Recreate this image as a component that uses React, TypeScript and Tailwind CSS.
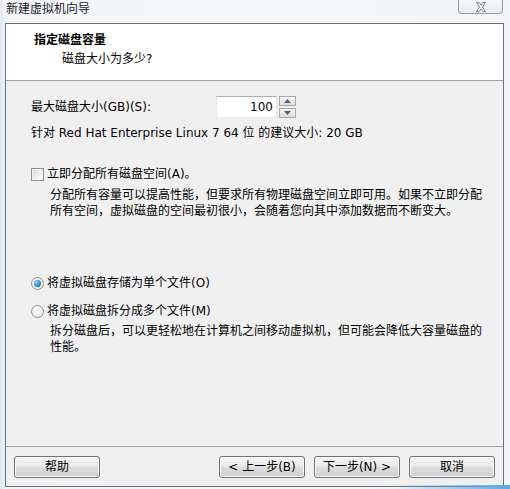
import React from "react";

const FONT = { fontFamily: '"DejaVu Sans", "Noto Sans CJK SC", sans-serif' };

function Btn({ children }: { children: React.ReactNode }) {
  return (
    <div className="w-[86px] h-[22px] rounded-[3px] border border-[#707070] bg-[linear-gradient(#f2f2f2_0%,#ebebeb_45%,#dddddd_50%,#cfcfcf_100%)] shadow-[inset_0_0_0_1px_#fcfcfc] flex items-center justify-center text-[12px] leading-[16px] text-black">
      {children}
    </div>
  );
}

function Radio({ checked }: { checked?: boolean }) {
  return (
    <div className="w-[13px] h-[13px] rounded-full border border-[#8e8f8f] bg-[radial-gradient(circle_at_40%_40%,#ffffff,#e0e0e0)] flex items-center justify-center shrink-0">
      {checked && (
        <div className="w-[7px] h-[7px] rounded-full bg-[radial-gradient(circle_at_35%_35%,#8fd4ff,#1c6fbf_70%,#0c4a8a)]" />
      )}
    </div>
  );
}

export default function App() {
  return (
    <div
      className="w-[510px] h-[489px] overflow-hidden relative bg-[linear-gradient(90deg,#dfe7ef_0px,#f3f5f8_6px,#f6f7f9_60%,#f2f4f7_100%)]"
      style={FONT}
    >
      {/* title bar */}
      <div className="h-[23px] flex items-start justify-between">
        <div className="pl-[6px] pt-[1px] text-[12px] leading-[16px] text-[#1a1a1a]">新建虚拟机向导</div>
        <div className="mr-[7px] w-[45px] h-[14px] rounded-b-[4px] border border-t-0 border-[#9a9ea6] bg-[linear-gradient(#f8f8f8,#e9ebee)] flex items-center justify-center">
          <svg width="12" height="10" viewBox="0 0 12 10">
            <path
              d="M1.5 0.5 L4 0.5 L6 3 L8 0.5 L10.5 0.5 L7.5 5 L10.5 9.5 L8 9.5 L6 7 L4 9.5 L1.5 9.5 L4.5 5 Z"
              fill="#f4f4f4"
              stroke="#7a7f88"
              strokeWidth="1"
              strokeLinejoin="round"
            />
          </svg>
        </div>
      </div>

      {/* client */}
      <div className="ml-[5px] w-[499px] h-[464px] border border-[#6e6e6e] bg-[#f0f0f0] flex flex-col text-black">
        {/* header */}
        <div className="h-[56px] bg-white pt-[8px] shrink-0">
          <div className="pl-[28px] text-[12px] leading-[16px] font-bold">指定磁盘容量</div>
          <div className="pl-[56px] mt-[3px] text-[12px] leading-[16px]">磁盘大小为多少?</div>
        </div>
        <div className="h-px bg-[#a0a0a0] shrink-0" />

        {/* body */}
        <div className="flex-1 pl-[25px] pt-[15px] text-[12px] leading-[16px]">
          <div className="flex items-center h-[22px]">
            <div className="w-[185px]">最大磁盘大小(GB)(S):</div>
            <div className="w-[61px] h-[22px] bg-white border border-[#abadb3] border-r-[#dbdfe6] border-b-[#e3e9ef] border-l-[#e2e3ea] flex items-center justify-end pr-[3px]">
              100
            </div>
            <div className="ml-[2px] flex flex-col gap-[2px]">
              <div className="w-[17px] h-[10px] border border-[#a7a7a7] bg-[linear-gradient(#f6f6f6,#dedede)] flex items-center justify-center">
                <svg width="7" height="4" viewBox="0 0 7 4"><path d="M0 4 L3.5 0 L7 4 Z" fill="#4a5f8c" /></svg>
              </div>
              <div className="w-[17px] h-[10px] border border-[#a7a7a7] bg-[linear-gradient(#f6f6f6,#dedede)] flex items-center justify-center">
                <svg width="7" height="4" viewBox="0 0 7 4"><path d="M0 0 L3.5 4 L7 0 Z" fill="#4a5f8c" /></svg>
              </div>
            </div>
          </div>
          <div className="mt-[7px]">针对 Red Hat Enterprise Linux 7 64 位 的建议大小: 20 GB</div>

          <div className="mt-[25px] flex items-center gap-[3px]">
            <div className="w-[13px] h-[13px] border border-[#8e8f8f] bg-[linear-gradient(135deg,#dcdcdc,#ffffff)] shadow-[inset_0_0_0_1px_#f4f4f4] shrink-0" />
            <div>立即分配所有磁盘空间(A)。</div>
          </div>
          <div className="mt-[5px] ml-[19px] w-[436px]">
            分配所有容量可以提高性能，但要求所有物理磁盘空间立即可用。如果不立即分配所有空间，虚拟磁盘的空间最初很小，会随着您向其中添加数据而不断变大。
          </div>

          <div className="mt-[56px] flex items-center gap-[3px]">
            <Radio checked />
            <div>将虚拟磁盘存储为单个文件(O)</div>
          </div>
          <div className="mt-[12px] flex items-center gap-[3px]">
            <Radio />
            <div>将虚拟磁盘拆分成多个文件(M)</div>
          </div>
          <div className="mt-[4px] ml-[19px] w-[436px]">
            拆分磁盘后，可以更轻松地在计算机之间移动虚拟机，但可能会降低大容量磁盘的性能。
          </div>
        </div>

        {/* footer */}
        <div className="h-px bg-[#a0a0a0] shrink-0" />
        <div className="h-[39px] shrink-0 flex items-start justify-between px-[8px] pt-[9px]">
          <Btn>帮助</Btn>
          <div className="flex gap-[9px]">
            <Btn>&lt; 上一步(B)</Btn>
            <Btn>下一步(N) &gt;</Btn>
            <Btn>取消</Btn>
          </div>
        </div>
      </div>
      <div className="absolute right-0 bottom-0 w-[120px] h-[4px] bg-[linear-gradient(90deg,transparent,#5aa9e6)]" />
    </div>
  );
}
